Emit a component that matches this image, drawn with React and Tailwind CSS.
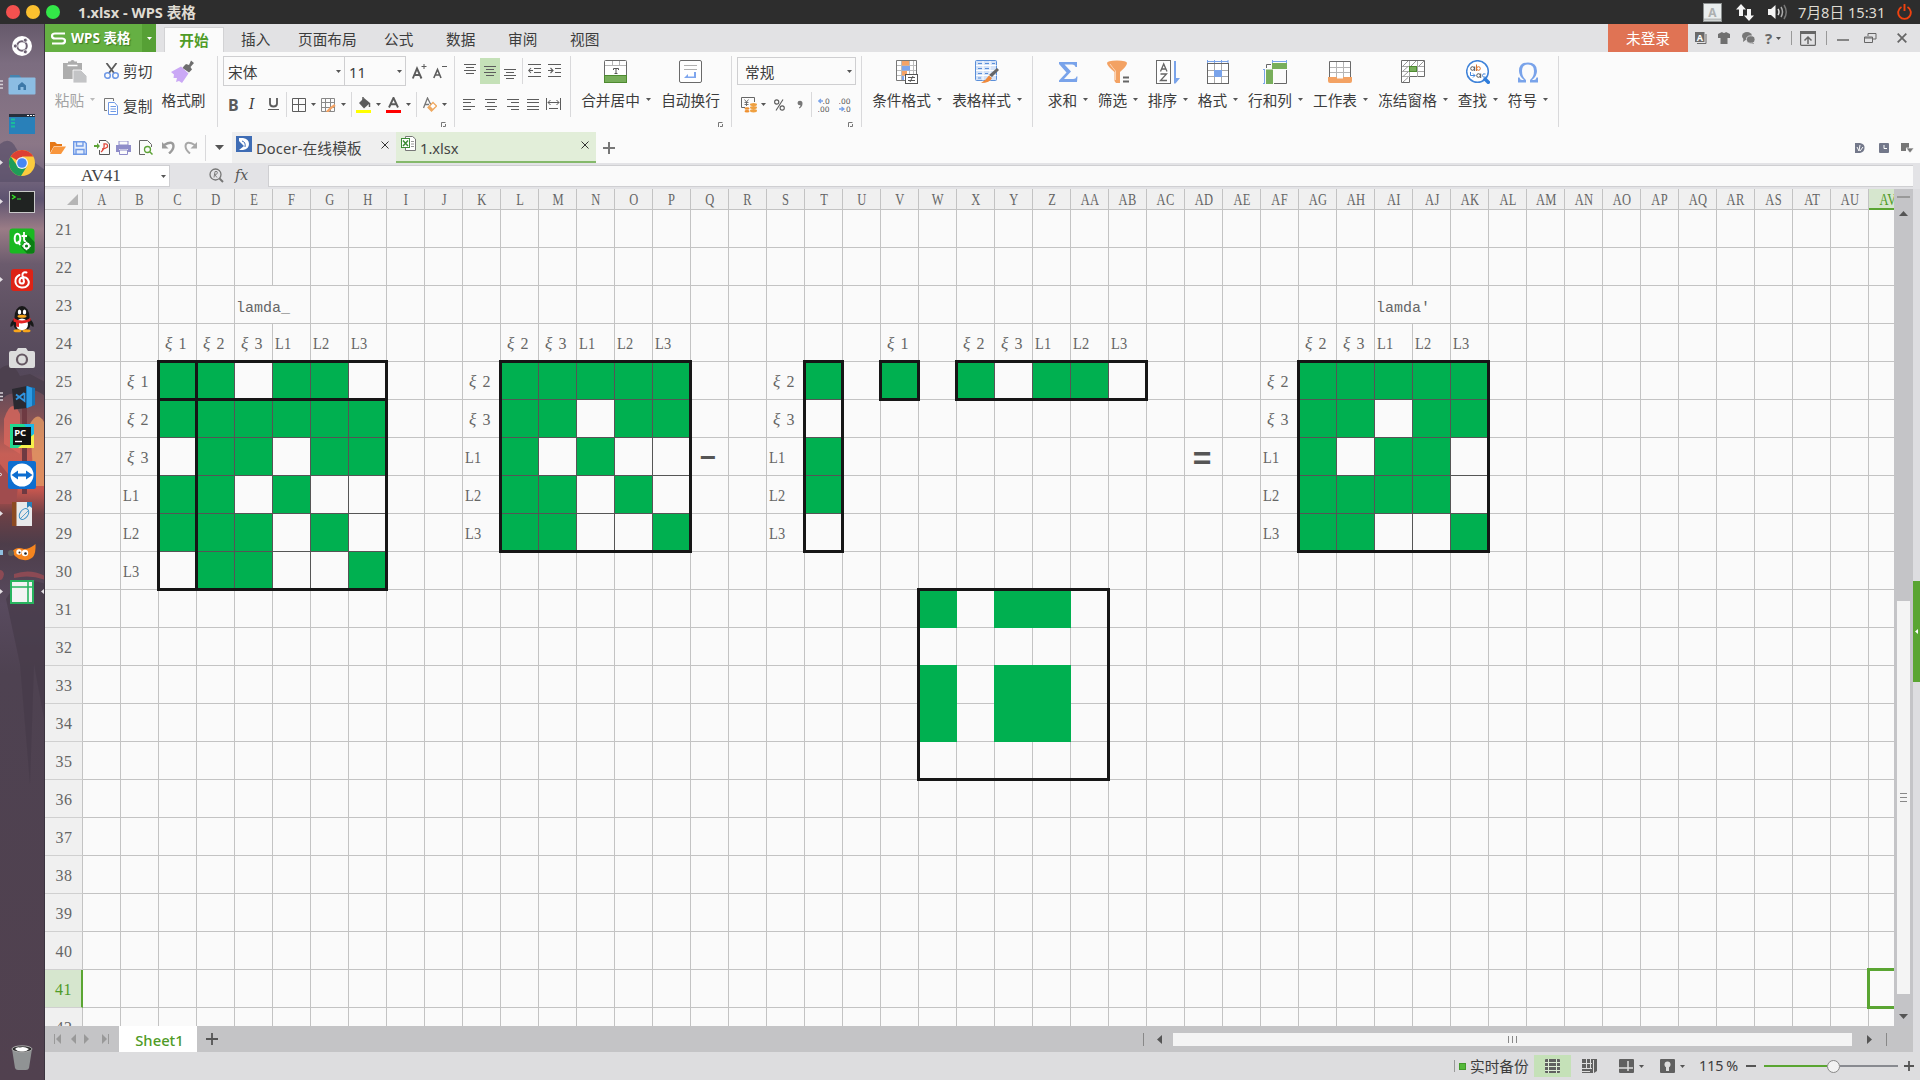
import React from "react";

const UI = "font-['Noto_Sans','Noto_Sans_CJK_SC',sans-serif]";

function Svg({ w = 24, h = 24, vb, className = "", children }) {
  return (
    <svg width={w} height={h} viewBox={vb || `0 0 ${w} ${h}`} fill="none" className={`block shrink-0 ${className}`}>
      {children}
    </svg>
  );
}

function Caret({ className = "", color = "#555" }) {
  return (
    <Svg w={5} h={3} className={className}>
      <path d="M0 0H5L2.5 3Z" fill={color} />
    </Svg>
  );
}

/* ---------- Title bar ---------- */

function TitleBar() {
  return (
    <div className="flex h-6 items-center bg-[#2d2d2d] text-[#dfdbd2]">
      <div className="ml-1.5 flex gap-1.5">
        <span className="size-3.5 rounded-full bg-[#f4514f]" />
        <span className="size-3.5 rounded-full bg-[#fbc02f]" />
        <span className="size-3.5 rounded-full bg-[#33e748]" />
      </div>
      <span className="ml-[18px] text-[14.67px] leading-6 font-bold whitespace-pre">1.xlsx - WPS 表格</span>
      <div className="ml-auto flex items-center">
        <Svg w={19} h={19}>
          <rect x=".5" y=".5" width="18" height="18" fill="#e9eded" stroke="#8b8f8f" />
          <path d="M1 16.5H18" stroke="#b9bdbd" strokeWidth="2" />
          <text x="9.500" y="14" fontSize="12" fontWeight="bold" textAnchor="middle" fill="#adb0b0" fontFamily="Noto Sans">A</text>
        </Svg>
        <Svg w={18} h={17} className="ml-3.5">
          <path d="M5 0L10 5.500H7V12H3V5.500H0ZM13 17L8 11.500H11V5H15V11.500H18Z" fill="#f4f4f4" />
        </Svg>
        <Svg w={20} h={16} className="ml-3.5">
          <path d="M0 5H3L7.500 1V15L3 11H0Z" fill="#f4f4f4" />
          <path d="M10 5Q12 8 10 11" stroke="#ddd" strokeWidth="1.500" />
          <path d="M13 3Q16 8 13 13" stroke="#aaa" strokeWidth="1.500" />
          <path d="M16 1Q20.500 8 16 15" stroke="#777" strokeWidth="1.500" />
        </Svg>
        <span className="ml-[10px] w-[87px] text-[14.67px] leading-6 whitespace-nowrap">7月8日 15:31</span>
        <Svg w={15} h={16} className="mr-[8px] ml-[12px]">
          <path d="M4.500 3A6.300 6.300 0 1 0 10.500 3M7.500 0V7" stroke="#f1420f" strokeWidth="1.900" />
        </Svg>
      </div>
    </div>
  );
}

/* ---------- Launcher ---------- */

const launcher = [
  { mark: "", icon: (
    <Svg w={28} h={28}>
      <circle cx="14" cy="14" r="10" fill="#fff" />
      <circle cx="14" cy="14" r="4.800" stroke="#6c6072" strokeWidth="2" />
      <circle cx="7.300" cy="14" r="2" fill="#6c6072" stroke="#fff" strokeWidth=".8" />
      <circle cx="17.300" cy="8.200" r="2" fill="#6c6072" stroke="#fff" strokeWidth=".8" />
      <circle cx="17.300" cy="19.800" r="2" fill="#6c6072" stroke="#fff" strokeWidth=".8" />
    </Svg>) },
  { mark: "bars", icon: (
    <Svg w={28} h={28}>
      <path d="M2 4H11L13 6V10H2Z" fill="#4684b0" />
      <rect x="0.500" y="6.500" width="27" height="17" rx="1" fill="#8cbde3" />
      <path d="M14 11L18 14.500V19H15.500V16H12.500V19H10V14.500Z" fill="#3d78a8" />
    </Svg>) },
  { mark: "", icon: (
    <Svg w={28} h={28}>
      <rect x="1" y="4" width="26" height="20" fill="#2980b9" />
      <rect x="1" y="4" width="26" height="3" fill="#262f3c" />
      <path d="M19 5.500H21M22 5.500H24M25 5.500H26.500" stroke="#fff" />
      <path d="M3 9.500H7M3 13H7M3 16.500H7" stroke="#1abc9c" strokeWidth="2.200" />
    </Svg>) },
  { mark: "tri", icon: (
    <Svg w={28} h={28}>
      <circle cx="14" cy="14" r="13" fill="#fccb3e" />
      <path d="M14 14L2.700 7.500A13 13 0 0 1 25.300 7.500H14Z" fill="#dd4033" />
      <path d="M2.700 7.500A13 13 0 0 0 13 27L18.500 18L8 15Z" fill="#1f9d58" />
      <circle cx="14" cy="14" r="6" fill="#f3f3f3" />
      <circle cx="14" cy="14" r="4.800" fill="#4486f4" />
    </Svg>) },
  { mark: "tri", icon: (
    <Svg w={28} h={28}>
      <rect x="1.500" y="3.500" width="25" height="21" fill="#202322" stroke="#c9c9c9" />
      <path d="M4 7L7 9L4 11" stroke="#35e225" strokeWidth="1.500" />
      <path d="M9 11H13" stroke="#35b335" strokeWidth="1.300" />
    </Svg>) },
  { mark: "", icon: (
    <Svg w={28} h={28}>
      <rect x="1.500" y="1.500" width="25" height="25" rx="3" fill="#19b921" />
      <path d="M13 20L20 8L26.500 15V24Q26.500 26.500 24 26.500H19Z" fill="#0b7f13" />
      <ellipse cx="9.500" cy="11.500" rx="2.800" ry="4.800" stroke="#fff" strokeWidth="2" />
      <path d="M10 14L12 18M16 5V12Q16 14.500 18 14M13.500 9H19" stroke="#fff" strokeWidth="1.800" />
      <circle cx="18.500" cy="19" r="2.500" stroke="#fff" strokeWidth="1.800" />
      <path d="M18.500 14.700V16M18.500 22V23.300M14.200 19H15.500M21.500 19H22.800" stroke="#fff" strokeWidth="1.500" />
    </Svg>) },
  { mark: "tri", icon: (
    <Svg w={28} h={28}>
      <rect x="3" y="3" width="22" height="22" rx="3" fill="#dd2316" />
      <path d="M18.500 6.500C16 5.500 14 7 14.500 9.500L16 15.500C15.500 18.500 11.500 18 11.500 15C11.500 11 17 10 19.500 13C23 18 18.500 22 13.500 21.500C6 20.500 5.500 12 11.500 9" stroke="#fff" strokeWidth="2" strokeLinecap="round" />
    </Svg>) },
  { mark: "", icon: (
    <Svg w={28} h={28}>
      <path d="M6 14Q1.500 18 2.500 22Q4 22 6 19ZM22 14Q26.500 18 25.500 22Q24 22 22 19Z" fill="#181818" />
      <ellipse cx="14" cy="12" rx="7.500" ry="11" fill="#181818" />
      <ellipse cx="14" cy="19" rx="8.500" ry="7.500" fill="#181818" />
      <ellipse cx="14" cy="19.500" rx="6" ry="6" fill="#fff" />
      <ellipse cx="11.500" cy="7" rx="1.700" ry="2.500" fill="#fff" />
      <ellipse cx="16.500" cy="7" rx="1.700" ry="2.500" fill="#fff" />
      <ellipse cx="14" cy="11.300" rx="4.500" ry="1.500" fill="#f8a51b" />
      <path d="M5.500 13Q14 18 22.500 13V16Q14 20.500 5.500 16.500ZM8 16.500H11V22L8 21.500Z" fill="#e32424" />
      <ellipse cx="9.500" cy="25.800" rx="4" ry="1.500" fill="#f8a51b" />
      <ellipse cx="18.500" cy="25.800" rx="4" ry="1.500" fill="#f8a51b" />
    </Svg>) },
  { mark: "", icon: (
    <Svg w={28} h={28}>
      <path d="M3 7H8L10 4H18L20 7H25Q27 7 27 9V22Q27 24 25 24H3Q1 24 1 22V9Q1 7 3 7Z" fill="#dcdcdc" />
      <circle cx="14" cy="15.500" r="5" stroke="#655762" strokeWidth="2.200" />
    </Svg>) },
  { mark: "bars", icon: (
    <Svg w={28} h={28}>
      <path d="M4 6L19 3V25L6 26.500Z" fill="#2a2930" />
      <path d="M18 3L27 5V22L18 25Z" fill="#1673b5" />
      <path d="M19 3L24 5V23L19 25Z" fill="#2c9ae2" />
      <path d="M16.500 10V18L8 11.500M8 16.500L16.500 10" stroke="#3195df" strokeWidth="1.800" />
    </Svg>) },
  { mark: "", icon: (
    <Svg w={28} h={28}>
      <rect x="2" y="2" width="24" height="24" fill="#22d88f" />
      <path d="M16 2H26V16Z" fill="#1cb7e8" />
      <path d="M26 12V26H10Z" fill="#f6f04a" />
      <rect x="5" y="5" width="18" height="18" fill="#111" />
      <text x="6.200" y="14.200" fontSize="9.500" fontWeight="bold" fill="#fff" fontFamily="Noto Sans">PC</text>
      <path d="M7 19.500H14" stroke="#fff" strokeWidth="1.400" />
    </Svg>) },
  { mark: "dot", icon: (
    <Svg w={28} h={28}>
      <rect width="28" height="28" rx="2" fill="#0d6ed0" />
      <circle cx="14" cy="14" r="11.500" fill="#fff" />
      <path d="M3.500 14L10 9.500V12.500H18V9.500L24.500 14L18 18.500V15.500H10V18.500Z" fill="#0d6ed0" />
    </Svg>) },
  { mark: "tri", icon: (
    <Svg w={28} h={28}>
      <rect x="4" y="2" width="20" height="24" fill="#e9e9ea" />
      <rect x="4" y="2" width="4.500" height="24" fill="#8c4a22" />
      <path d="M19 2H24V8L21.500 6L19 8Z" fill="#2980b9" />
      <ellipse cx="16" cy="14" rx="4" ry="6" transform="rotate(35 16 14)" stroke="#3b8fc4" />
      <path d="M12 19L21 10" stroke="#3b8fc4" strokeWidth=".8" />
    </Svg>) },
  { mark: "blue", icon: (
    <Svg w={28} h={28}>
      <path d="M4 13Q8 7 16 10Q22 10 27.500 5Q28 14 25 18Q20 23 11 20Q6 17 4 13Z" fill="#f5851f" />
      <circle cx="3" cy="14" r="3" fill="#5f5f5f" />
      <circle cx="11" cy="13" r="2.700" fill="#fff" />
      <circle cx="17" cy="14" r="3.200" fill="#fff" />
      <circle cx="11.500" cy="13.500" r="1" fill="#222" />
      <circle cx="17.500" cy="14.500" r="1.300" fill="#222" />
    </Svg>) },
  { mark: "both", icon: (
    <Svg w={28} h={28}>
      <rect x="3" y="3" width="22" height="22" fill="#f3f3f3" stroke="#28b45f" strokeWidth="2" />
      <path d="M3 9H25M20 3V25" stroke="#28b45f" strokeWidth="1.600" />
    </Svg>) },
];

function Mark({ kind }) {
  if (kind === "bars") return <Svg w={3} h={9}><path d="M0 1H3M0 4.500H3M0 8H3" stroke="#d5d0d6" strokeWidth="1.300" /></Svg>;
  if (kind === "blue") return <Svg w={3} h={5}><path d="M0 0H3V5H0Z" fill="#8fc0e0" /></Svg>;
  if (kind === "dot") return <Svg w={3} h={5}><path d="M0 1L2 2.500L0 4" stroke="#ddd" /></Svg>;
  if (kind) return <Svg w={3} h={5}><path d="M0 0L3 2.500L0 5Z" fill="#e5e0e5" /></Svg>;
  return null;
}

function Launcher() {
  return (
    <aside className="relative flex w-[45px] shrink-0 flex-col overflow-hidden border-r border-[#3c3440] bg-[linear-gradient(to_bottom,#66596b_0px,#7c6d80_40px,#8b7787_120px,#77687f_150px,#5d5370_175px,#9a7c86_205px,#6b5b6d_240px,#5c4f60_300px,#54485a_350px,#8b5355_400px,#c65f56_430px,#c8574f_465px,#6c4046_490px,#4d3d4a_520px,#584a5e_580px,#4e4251_650px,#51414f_1056px)]">
      <svg width="45" height="1056" viewBox="0 0 45 1056" fill="none" className="absolute inset-0">
        <path d="M0 120Q10 112 16 124Q20 134 34 138L45 146V158H0Z" fill="#5a5069" opacity=".7" />
        <path d="M0 345Q12 335 20 352L30 350L45 358V372Q30 360 20 372Q10 365 0 378Z" fill="#4c404e" />
        <path d="M4 395Q12 372 20 390V430L4 420Z" fill="#d8665c" opacity=".8" />
        <path d="M30 400Q38 385 45 400V462H34Z" fill="#e29a64" opacity=".8" />
        <path d="M22 380H27V470H22Z" fill="#6e3a42" />
        <path d="M0 440Q8 450 18 462L16 480H0Z" fill="#a04c4e" />
        <path d="M0 546Q3 546 4 550Q3 556 0 556ZM14 550Q30 544 45 552V556Q30 550 14 554Z" fill="#8c4a54" />
        <path d="M6 575Q20 550 45 560V700L34 640L30 760L20 640Z" fill="#463a49" opacity=".7" />
      </svg>
      <div className="relative flex h-full flex-col pt-[2px]">
        {launcher.map((it, i) => (
          <div key={i} className="flex h-[39px] items-center">
            <div className="w-2"><Mark kind={it.mark} /></div>
            {it.icon}
            {it.mark === "both" && <Svg w={3} h={5} className="ml-auto"><path d="M3 0L0 2.500L3 5Z" fill="#e5e0e5" /></Svg>}
          </div>
        ))}
        <Svg w={28} h={28} className="mt-auto mb-[8px] ml-2">
          <path d="M4 5H24L21 24Q20.500 26 18 26H10Q7.500 26 7 24Z" fill="#909394" />
          <ellipse cx="14" cy="5" rx="10" ry="3.200" fill="#2f2f2f" stroke="#aaa" />
          <path d="M7 5Q9 2.500 12 3.500Q16 2 21 5Q18 8 14 7.500Q10 8 7 5Z" fill="#fff" />
        </Svg>
      </div>
    </aside>
  );
}

/* ---------- Menu tabs ---------- */

function MenuRow() {
  return (
    <div className="flex h-7 items-stretch bg-[#e2e2e4] text-[14.67px] text-[#3c3c3c]">
      <div className="flex w-[97px] items-center bg-[#65b043] text-white">
        <Svg w={15} h={13} className="ml-1.5">
          <path d="M14 1.500H4Q1 1.500 1 4Q1 6.500 4 6.500H11Q14 6.500 14 9Q14 11.500 11 11.500H1" stroke="#fff" strokeWidth="2.200" />
        </Svg>
        <span className="ml-[5px] text-[13.5px] font-bold whitespace-nowrap [text-shadow:1px_1px_1px_#3c7a20]">WPS 表格</span>
      </div>
      <div className="flex w-[14px] items-center justify-center bg-[#56a035]"><Caret color="#fff" /></div>
      <div className="ml-2 flex h-[25px] w-[60px] items-center justify-center self-end border border-b-0 border-[#d2d2d4] bg-[#fbfbfb] pb-px text-[14.67px] font-bold text-[#4f9b27]">开始</div>
      <div className="ml-[17px] flex pt-px [&>span]:flex [&>span]:items-center [&>span]:whitespace-nowrap">
        <span className="w-[57px]">插入</span>
        <span className="w-[86px]">页面布局</span>
        <span className="w-[62px]">公式</span>
        <span className="w-[62px]">数据</span>
        <span className="w-[62px]">审阅</span>
        <span>视图</span>
      </div>
      <div className="ml-auto flex items-center">
        <div className="flex h-full w-20 items-center justify-center bg-[#e07354] text-white">未登录</div>
        <Svg w={12} h={12} className="ml-[7px]">
          <rect width="9.500" height="10" fill="#6a6a6a" />
          <path d="M11 2V11.500H2" stroke="#6a6a6a" />
          <text x="4.800" y="8.500" fontSize="9" fontWeight="bold" textAnchor="middle" fill="#fff" fontFamily="Noto Sans">A</text>
        </Svg>
        <Svg w={12} h={12} className="ml-[11px]">
          <path d="M0 2L4 0Q6 2 8 0L12 2V6H9.500V12H2.500V6H0Z" fill="#6f6f6f" />
        </Svg>
        <Svg w={13} h={12} className="ml-3">
          <ellipse cx="5" cy="4" rx="5" ry="4" fill="#777" />
          <path d="M1.500 6L1 10L5 7ZM10 9L12 12L7 11Z" fill="#777" />
          <ellipse cx="8.700" cy="7.500" rx="4.300" ry="3.700" fill="#777" stroke="#e2e2e4" strokeWidth=".8" />
        </Svg>
        <span className="ml-[10px] w-[9px] text-[15px] font-bold text-[#6a6a6a]">?</span>
        <Caret className="ml-[2px]" />
        <span className="ml-[10px] h-3.5 w-px bg-[#999]" />
        <Svg w={16} h={15} className="ml-2">
          <rect x=".6" y=".6" width="14.800" height="13.800" rx="1" stroke="#666" strokeWidth="1.200" />
          <path d="M0 0H16V3H0Z" fill="#666" />
          <path d="M8 13V6M4.500 9.500L8 6L11.500 9.500" stroke="#666" strokeWidth="1.500" />
        </Svg>
        <span className="ml-[10px] h-3.5 w-px bg-[#999]" />
        <Svg w={12} h={12} className="ml-[10px]"><path d="M0 8H12" stroke="#666" strokeWidth="1.500" /></Svg>
        <Svg w={13} h={12} className="ml-[15px]">
          <path d="M.5 5H8.500V10.500H.5ZM.5 6H8.500M4 4V1.500H12V7H9" stroke="#666" />
        </Svg>
        <Svg w={10} h={10} className="mr-[13px] ml-5"><path d="M.7 .7L9.300 9.300M9.300 .7L.7 9.300" stroke="#666" strokeWidth="1.800" /></Svg>
      </div>
    </div>
  );
}

/* ---------- Ribbon ---------- */

function Sep({ className = "" }) {
  return <span className={`w-px shrink-0 bg-[#d9d9db] ${className}`} />;
}

function Lines({ d, w = 14, h = 14, children, className = "" }) {
  return (
    <Svg w={w} h={h} className={className}>
      <path d={d} stroke="#5c5c5c" />
      {children}
    </Svg>
  );
}

function Dialog({ className = "" }) {
  return <Svg w={5} h={5} className={className}><path d="M.5 5V.5H4.500M2 4.500H4.500V2" stroke="#777" /></Svg>;
}

const bigIcons = {
  merge: (
    <Svg>
      <rect x=".5" y=".5" width="22" height="22" rx="1" fill="#fff" stroke="#6a6a6a" />
      <path d="M1 5.500H22M8.500 1V5.500M15.500 1V5.500" stroke="#b5b5b5" />
      <rect x=".5" y="15.500" width="22" height="7" fill="#77ad5a" stroke="#4e8a30" />
      <path d="M9.500 10V8.500H14.500V10M12 8.500V13.500M10.500 13.500H13.500" stroke="#555" />
    </Svg>),
  wrap: (
    <Svg>
      <rect x=".5" y=".5" width="22" height="22" rx="1.500" fill="#fff" stroke="#6a6a6a" />
      <path d="M5 5.500H18M5 9.500H18" stroke="#b0b0b0" />
      <path d="M15 12H17V18H8L5 18L9 14V16.500H15Z" fill="#7ea6ee" />
    </Svg>),
  cond: (
    <Svg>
      <path d="M1.500 .5H21.500V20.500H1.500Z" fill="#fff" stroke="#777" />
      <path d="M2 5.500H21M2 10.500H21M2 15.500H21M6.500 1V20M14.500 1V20M18.500 1V15" stroke="#bcbcbc" />
      <path d="M7 1H14V5.500H7ZM7 11H12V15.500H7Z" fill="#f5a368" />
      <path d="M7 6H15V10.500H7ZM7 16H9V20H7Z" fill="#7ea6ee" />
      <rect x="10.500" y="14.500" width="12" height="9" fill="#fff" stroke="#555" />
      <path d="M13 17.500H20M13 20.500H20M18 16L15 22" stroke="#555" />
    </Svg>),
  style: (
    <Svg>
      <rect x=".5" y=".5" width="21" height="20" rx="1" fill="#d4e2f7" stroke="#5b8fd9" />
      <path d="M1 5.500H21.500M1 10.500H21.500M1 15.500H21.500M8 1V20.500M15 1V20.500" stroke="#fff" />
      <path d="M3 3.500H7M10 3.500H14M17 3.500H20M3 8.500H7M10 8.500H14M3 13.500H7M10 13.500H13M3 18H6" stroke="#5b8fd9" />
      <path d="M22 8L24 10L17 17L14 15Z" fill="#666" />
      <path d="M14 15.500L17 18Q15 23 6 23Q11 20 14 15.500Z" fill="#f08a3c" />
    </Svg>),
  sum: <Svg><path d="M3 2H21V7H19.500Q19 4.500 16 4.500H8.500L15 11.500L8 19H17Q20 19 20.500 16.500H21.500L21 22H3V20.500L10.500 12.500L3 4Z" fill="#79a3ea" /></Svg>,
  filter: (
    <Svg>
      <path d="M1 3Q1 .5 11 .5Q21 .5 21 3Q21 6 14 12V23H10L8.500 21V12Q1 6 1 3Z" fill="#f3a263" />
      <path d="M4 4Q6 7 9.500 11V20" stroke="#fbd3b3" />
      <path d="M17 17.500H23M17 21.500H23" stroke="#666" strokeWidth="1.800" />
    </Svg>),
  sort: (
    <Svg className="-ml-px">
      <rect x=".5" y=".5" width="14" height="23" fill="#fff" stroke="#6a6a6a" />
      <path d="M4.500 11.500L7.700 4L11 11.500M5.500 9H10M4.500 14H10.500L4.500 20.500H11" stroke="#666" strokeWidth="1.300" />
      <path d="M18 1H20V18H24L19.500 23.500H18Z" fill="#79a3ea" />
    </Svg>),
  format: (
    <Svg>
      <path d="M1 1.500H22M1.500 0V3M8.500 0V3M15.500 0V3M22 0V3" stroke="#79a3ea" />
      <rect x="1.500" y="3.500" width="21" height="20" stroke="#666" fill="#fff" />
      <path d="M2 10.500H22M2 16.500H22M8.500 4V23M15.500 4V23" stroke="#aaa" />
      <rect x="8" y="10" width="8" height="7" fill="#79a3ea" />
    </Svg>),
  rowcol: (
    <Svg className="-ml-[2px]">
      <path d="M9 1.500H23.500M9.500 0V3M23.500 0V3M1.500 9.500V23.500M0 9.500H2M0 23.500H2" stroke="#79a3ea" />
      <path d="M3.500 8V4.500H8M23.500 10V23.500H11" stroke="#666" />
      <rect x="9" y="3" width="15" height="6" fill="#78ae5b" />
      <rect x="3" y="9.500" width="7" height="14.500" fill="#78ae5b" />
    </Svg>),
  sheet: (
    <Svg className="-ml-[2px]">
      <path d="M1.500 17V1.500H22.500V17" stroke="#6a6a6a" fill="#fff" />
      <path d="M2 7.500H22M2 12.500H22M8.500 2V17M15.500 2V17" stroke="#b5b5b5" />
      <path d="M0 17H9V18.500H15V17H24V21Q24 23 22 23H2Q0 23 0 21Z" fill="#f3a263" />
    </Svg>),
  freeze: (
    <Svg>
      <path d="M.5 .5H23.500V16.500H8.500V22.500H.5Z" fill="#fff" stroke="#6a6a6a" />
      <path d="M1 6.500H23M1 11.500H23M1 16.500H8M8.500 1V17M16.500 1V17" stroke="#aaa" />
      <path d="M2 6L7 1M10 6L15 1M18 6L23 1M2 11L7 6.500M2 16.500L7 12M2 22L7 17.500" stroke="#999" />
      <rect x="8.500" y="6.500" width="7" height="5" fill="#78ae5b" stroke="#4e8a30" />
    </Svg>),
  find: (
    <Svg>
      <circle cx="11.500" cy="11.500" r="10.800" stroke="#4184d9" strokeWidth="1.500" fill="#fff" />
      <path d="M18 18L23.500 23.500" stroke="#2f7ddb" strokeWidth="3.500" />
      <circle cx="6.500" cy="8.500" r="1.800" stroke="#555" /><path d="M8.700 6.500V11" stroke="#555" />
      <circle cx="12.500" cy="8.500" r="1.800" stroke="#d9722b" /><path d="M10.500 4.500V11" stroke="#d9722b" />
      <path d="M4.500 12V15.500H9M7 13.500L9 15.500L7 17.500" stroke="#4184d9" />
      <circle cx="12.500" cy="15.500" r="1.800" stroke="#555" /><path d="M14.700 13.500V18" stroke="#555" />
      <path d="M19.500 14Q16.500 13 16.500 15.500Q16.500 18 19.500 17" stroke="#4184d9" />
    </Svg>),
  omega: (
    <Svg>
      <path d="M2 22.500V17.500H3.500Q4 20 6 20H8Q3 16 3 11Q3 2.500 12 2.500Q21 2.500 21 11Q21 16 16 20H18Q20 20 20.500 17.500H22V22.500H14V20Q18 17 18 11Q18 4.500 12 4.500Q6 4.500 6 11Q6 17 10 20V22.500Z" fill="#79a3ea" />
    </Svg>),
  paste: (
    <Svg>
      <path d="M0 3H5V1.500H7.500Q7.500 0 9.500 0Q11.500 0 11.500 1.500H14V3H19V10H11V19H0Z" fill="#adadad" />
      <path d="M4.500 5.500H14.500" stroke="#fff" strokeWidth="1.500" />
      <path d="M10 10H18L24 16V23H10Z" fill="#c3c4c6" stroke="#fff" strokeWidth=".8" />
    </Svg>),
  brush: (
    <Svg className="-ml-[4px]">
      <path d="M14 6L16 4L19 5L21 .5L24 3L20.500 7L22 9.500L19 12.500L12.500 8Z" fill="#6e6e6e" />
      <path d="M1 12L11 6.500L18.500 13.500L12 23L9 21L6 22L7 18L3.500 18L4 14.500Z" fill="#caa8f5" />
    </Svg>),
};

function Big({ icon, label, caret = true, className = "", dim = false }) {
  return (
    <div className={`flex shrink-0 flex-col items-center pt-2 ${className}`}>
      {bigIcons[icon]}
      <div className={`mt-[5px] flex h-[22px] items-center text-[14.67px] whitespace-nowrap ${dim ? "text-[#a3a3a3]" : "text-[#3c3c3c]"}`}>
        <span>{label}</span>
        {caret && <Caret className="-mt-px ml-[6px]" color={dim ? "#bbb" : "#555"} />}
      </div>
    </div>
  );
}

function Ribbon() {
  return (
    <div className="flex h-20 items-start bg-[#fbfbfb] text-[14.67px] text-[#3c3c3c]">
      <Big icon="paste" label="粘贴" dim className="ml-[7px] w-[46px]" />
      <div className="ml-[6px] flex w-[49px] flex-col pt-[8px]">
        <div className="flex h-[22px] items-center gap-1 whitespace-nowrap">
          <Svg w={15} h={16}>
            <path d="M2.500 0L10 10M12.500 0L5 10" stroke="#5c5c5c" strokeWidth="1.800" />
            <circle cx="3.500" cy="12.500" r="2.800" stroke="#6f99e6" strokeWidth="1.500" />
            <circle cx="11.500" cy="12.500" r="2.800" stroke="#6f99e6" strokeWidth="1.500" />
          </Svg>
          <span>剪切</span>
        </div>
        <div className="mt-[13px] flex h-[22px] items-center gap-1 whitespace-nowrap">
          <Svg w={15} h={17}>
            <path d="M3 12.500H.5V.5H9.500V3" stroke="#777" />
            <path d="M4.500 4.500H10.500L13.500 8V16.500H4.500Z" fill="#fff" stroke="#6f99e6" />
            <path d="M6.500 8.500H12M6.500 11H12M6.500 13.500H12" stroke="#6f99e6" />
          </Svg>
          <span>复制</span>
        </div>
      </div>
      <Big icon="brush" label="格式刷" caret={false} className="ml-[8px] w-[45px]" />
      <Sep className="mt-1 ml-[11px] h-[71px]" />

      <div className="ml-[5px] w-[225px] pt-1">
        <div className="flex h-[30px] items-center">
          <div className="flex h-[30px] w-[122px] items-center justify-between border border-[#cfcfd1] bg-[#fbfbfb] pt-px pr-[3px] pl-1"><span>宋体</span><Caret /></div>
          <div className="-ml-px flex h-[30px] w-[62px] items-center justify-between border border-[#cfcfd1] bg-[#fbfbfb] pt-px pr-[3px] pl-1"><span>11</span><Caret /></div>
          <Svg w={15} h={17} className="ml-[6px]">
            <path d="M.8 15.500L5 5.500L9.500 15.500M2.500 12H8" stroke="#5c5c5c" strokeWidth="1.900" />
            <path d="M9.500 3.500H14.500M12 1V6" stroke="#5c5c5c" />
          </Svg>
          <Svg w={15} h={17} className="ml-[6px]">
            <path d="M.8 15L4.500 6.500L8 15M2.500 12H7" stroke="#5c5c5c" strokeWidth="1.600" />
            <path d="M9 3.500H14" stroke="#5c5c5c" />
          </Svg>
        </div>
        <div className="mt-[6px] flex h-[25px] items-center">
          <span className="ml-[5px] w-[14px] font-['Noto_Sans'] text-[16px] font-bold text-[#5a5a5a]">B</span>
          <span className="ml-[7px] w-[14px] font-['DejaVu_Serif'] text-[14px] italic">I</span>
          <Svg w={11} h={13} className="ml-[5px]"><path d="M2 0V5.500Q2 8.500 5.500 8.500Q9 8.500 9 5.500V0" stroke="#5a5a5a" strokeWidth="1.800" /><path d="M0 11.500H11" stroke="#5a5a5a" /></Svg>
          <Sep className="ml-[7px] h-[25px]" />
          <Lines w={14} h={14} className="ml-[5px]" d="M.5 .5H13.500V13.500H.5ZM6.500 0V14M0 6.500H14" />
          <Caret className="ml-[5px]" />
          <Svg w={15} h={14} className="ml-[5px]">
            <path d="M.5 .5H13.500V13.500H.5ZM4.500 0V14M9.500 0V14M0 4.500H14M0 9.500H14" stroke="#888" />
            <path d="M6 14Q9 10 14 7" stroke="#f3a263" strokeWidth="2.500" />
          </Svg>
          <Caret className="ml-[5px]" />
          <Sep className="ml-[5px] h-[25px]" />
          <Svg w={15} h={16} className="ml-1">
            <path d="M3 6L8 1L14 6L8 11.500Z" fill="#5c5c5c" /><path d="M7 0V5M13.500 6V10" stroke="#5c5c5c" strokeWidth="1.500" />
            <path d="M0 13H15V16H0Z" fill="#ff0" />
          </Svg>
          <Caret className="ml-[5px]" />
          <Svg w={15} h={16} className="ml-[5px]">
            <path d="M3 10.500L7.500 0.800L12 10.500M4.500 7.300H10.500" stroke="#5c5c5c" strokeWidth="1.900" />
            <path d="M0 13H15V16H0Z" fill="red" />
          </Svg>
          <Caret className="ml-[5px]" />
          <Sep className="ml-[5px] h-[25px]" />
          <Svg w={14} h={15} className="ml-[6px]">
            <path d="M.5 11L4.500 1L8 8M2 7.500H6" stroke="#777" strokeWidth="1.300" />
            <path d="M10 5.500L13.500 9L8.500 14L5 10.500Z" stroke="#efa961" strokeWidth="1.300" fill="#fff" />
            <path d="M6.800 8.800L10.300 12.300L8.500 14L5 10.500Z" fill="#efa961" />
          </Svg>
          <Caret className="ml-[5px]" />
        </div>
        <Dialog className="mt-[5px] ml-[218px]" />
      </div>
      <Sep className="mt-1 ml-[6px] h-[71px]" />

      <div className="ml-[8px] flex w-[99px] flex-col pt-[6px]">
        <div className="flex h-[26px] items-center">
          <Lines w={13} h={20} className="ml-px" d="M0 3.500H12M2 6.500H10M0 9.500H12M2 12.500H10" />
          <span className="ml-[3px] flex h-[26px] w-5 items-center justify-center bg-[#c5e1b8]"><Lines w={12} h={12} d="M0 1.500H12M2 4.500H10M0 7.500H12M2 10.500H10" /></span>
          <Lines w={13} h={20} className="ml-1" d="M0 8.500H12M2 11.500H10M0 14.500H12M2 17.500H10" />
          <Sep className="ml-[5px] h-[26px]" />
          <Svg w={14} h={14} className="ml-[5px]"><path d="M0 .5H13M6 4.500H13M6 8.500H13M0 12.500H13M.5 6.500H5M3 4L.7 6.500L3 9" stroke="#5c5c5c" strokeWidth="1.100" /></Svg>
          <Svg w={14} h={14} className="ml-[6px]"><path d="M0 .5H13M7 4.500H13M7 8.500H13M0 12.500H13M0 6.500H5M2.500 4L5 6.500L2.500 9" stroke="#5c5c5c" strokeWidth="1.100" /></Svg>
        </div>
        <div className="mt-[14px] flex h-3 items-center">
          <Lines w={12} h={11} d="M0 .5H12M0 3.500H8M0 7.500H12M0 10.500H8" />
          <Lines w={12} h={11} className="ml-[10px]" d="M0 .5H12M2 3.500H10M0 7.500H12M2 10.500H10" />
          <Lines w={12} h={11} className="ml-[10px]" d="M0 .5H12M4 3.500H12M0 7.500H12M4 10.500H12" />
          <Lines w={12} h={11} className="ml-2" d="M0 .5H12M0 3.500H12M0 7.500H12M0 10.500H12" />
          <Lines w={15} h={12} className="ml-[7px]" d="M.5 0V12M14.500 0V12M3 10.500H12M2 4.500H13M4.500 2L2 4.500L4.500 7M10.500 2L13 4.500L10.500 7" />
        </div>
      </div>
      <Sep className="mt-1 ml-[8px] h-[61px]" />
      <Big icon="merge" label="合并居中" className="ml-[6px] w-[78px]" />
      <Big icon="wrap" label="自动换行" caret={false} className="ml-[5px] w-[61px]" />
      <Dialog className="mt-[70px] -ml-[3px]" />
      <Sep className="mt-1 ml-[8px] h-[71px]" />

      <div className="ml-[5px] w-[119px] pt-[5px]">
        <div className="flex h-7 items-center justify-between border border-[#cfcfd1] pt-px pr-[3px] pl-[7px]"><span>常规</span><Caret /></div>
        <div className="mt-[7px] flex h-[25px] items-center">
          <Svg w={17} h={16} className="ml-1">
            <path d="M4 10.500H.5V.5H13.500V5" stroke="#666" />
            <path d="M3.500 2.500L5.500 5L7.500 2.500M5.500 5V9M3.500 5.500H7.500M3.500 7.500H7.500" stroke="#666" strokeWidth=".9" />
            <ellipse cx="12.500" cy="7.500" rx="3.500" ry="1.500" fill="#efa040" />
            <ellipse cx="12.500" cy="10.500" rx="3.500" ry="1.500" fill="#efa040" />
            <ellipse cx="12.500" cy="13.700" rx="3.500" ry="1.700" fill="#efa040" />
            <ellipse cx="6" cy="11.500" rx="2.500" ry="1.300" fill="#ef9030" />
            <ellipse cx="6" cy="14.300" rx="2.500" ry="1.300" fill="#ef9030" />
          </Svg>
          <Caret className="ml-[3px]" />
          <Svg w={11} h={12} className="ml-2">
            <circle cx="2.700" cy="3" r="2.100" stroke="#5c5c5c" strokeWidth="1.100" /><circle cx="8.200" cy="9" r="2.100" stroke="#5c5c5c" strokeWidth="1.100" /><path d="M9 .5L2 11.500" stroke="#5c5c5c" strokeWidth="1.100" />
          </Svg>
          <Svg w={6} h={10} className="ml-[12px]"><path d="M.5 3Q.5 .8 3 .8Q5.500 .8 5.500 3.500Q5.500 7 2 8.500V7.500Q3.500 6.500 3.500 5.300Q.5 5.500 .5 3Z" fill="#777" /></Svg>
          <Sep className="ml-[8px] h-[25px]" />
          <Svg w={13} h={16} className="ml-[6px]">
            <path d="M.5 4H5M3 2L.7 4L3 6" stroke="#79a3ea" strokeWidth="1.300" />
            <text x="4.500" y="7" fontSize="7.500" fill="#555" fontFamily="DejaVu Sans">.0</text><text x="-.5" y="15" fontSize="7.500" fill="#555" fontFamily="DejaVu Sans">.00</text>
          </Svg>
          <Svg w={13} h={16} className="ml-[8px]">
            <text x="-.5" y="7" fontSize="7.500" fill="#555" fontFamily="DejaVu Sans">.00</text><text x="4.500" y="15" fontSize="7.500" fill="#555" fontFamily="DejaVu Sans">.0</text>
            <path d="M0 12H5M2.500 10L5 12L2.500 14" stroke="#79a3ea" strokeWidth="1.300" />
          </Svg>
        </div>
        <Dialog className="mt-[5px] ml-[111px]" />
      </div>
      <Sep className="mt-1 ml-[5px] h-[71px]" />
      <Big icon="cond" label="条件格式" className="ml-[5px] w-20" />
      <Big icon="style" label="表格样式" className="w-20" />
      <Sep className="mt-1 ml-[5px] h-[71px]" />
      <Big icon="sum" label="求和" className="ml-[10px] w-[50px]" />
      <Big icon="filter" label="筛选" className="w-[50px]" />
      <Big icon="sort" label="排序" className="w-[50px]" />
      <Big icon="format" label="格式" className="w-[50px]" />
      <Big icon="rowcol" label="行和列" className="w-[65px]" />
      <Big icon="sheet" label="工作表" className="w-[65px]" />
      <Big icon="freeze" label="冻结窗格" className="w-20" />
      <Big icon="find" label="查找" className="w-[50px]" />
      <Big icon="omega" label="符号" className="w-[50px]" />
      <Sep className="mt-1 ml-[5px] h-[71px]" />
    </div>
  );
}

/* ---------- Quick access and document tabs ---------- */

function Close({ className = "" }) {
  return <Svg w={8} h={8} className={className}><path d="M.5 .5L7.500 7.500M7.500 .5L.5 7.500" stroke="#333" /></Svg>;
}

function DocRow() {
  return (
    <div className="flex h-[31px] items-stretch bg-[#fbfbfb] text-[14.67px] text-[#444]">
      <div className="flex w-[187px] items-center">
        <Svg w={16} h={12} className="ml-[5px]"><path d="M0 0H5L7 2H12V4H4L0 11Z" fill="#e67817" /><path d="M4 4.500H16L11 12H0Z" fill="#f9963c" /></Svg>
        <Svg w={14} h={14} className="ml-[7px]"><path d="M.7 .7H11.500L13.300 2.500V13.300H.7Z" stroke="#6f99e6" strokeWidth="1.400" fill="#e6effc" /><path d="M3.500 1V5H10V1M3 13V8.500H11V13" stroke="#6f99e6" strokeWidth="1.400" /></Svg>
        <Svg w={17} h={15} className="ml-[7px]"><path d="M0 5H3V3L6 6L3 9V7H0Z" fill="#5da336" /><path d="M5.500 3V.5H12L15.500 4V14.500H5.500V10" stroke="#555" /><path d="M7 12Q11 9 10 4Q14 3 13.500 7Q11 9 8 9" stroke="#e0483c" strokeWidth="1.300" /></Svg>
        <Svg w={15} h={14} className="ml-[5px]"><path d="M3 0H12V4H3Z" stroke="#8f8dc9" /><path d="M0 4H15V11H12V8H3V11H0Z" fill="#8f8dc9" /><path d="M3.500 9H11.500V13.500H3.500Z" stroke="#8f8dc9" /></Svg>
        <Svg w={14} h={15} className="ml-[8px]"><path d="M6 14.500H.5V.5H8.500L12.500 4.500V7" stroke="#666" /><circle cx="8.500" cy="9.500" r="3" stroke="#5da336" strokeWidth="1.300" /><path d="M11 12L13.500 14.500" stroke="#5da336" strokeWidth="1.500" /></Svg>
        <Svg w={13} h={13} className="ml-[9px]"><path d="M2 4Q11 -1 11.500 5Q11.500 9 7 12.500" stroke="#9b9b9b" strokeWidth="2.400" /><path d="M0 1V7.500H6.500Z" fill="#9b9b9b" /></Svg>
        <Svg w={13} h={13} className="ml-[9px]"><path d="M11 4Q2 -1 1.500 5Q1.500 9 6 12.500" stroke="#a8a8a8" strokeWidth="2" /><path d="M13 1V7.500H6.500Z" fill="#a8a8a8" /></Svg>
        <Sep className="ml-2 h-[26px]" />
        <Svg w={9} h={5} className="ml-[9px]"><path d="M0 0H9L4.500 5Z" fill="#555" /></Svg>
      </div>
      <div className="flex w-[164px] bg-[#efefef]">
        <Svg w={16} h={16} className="mt-1 ml-1"><rect width="16" height="16" fill="#3f6db5" /><path d="M3 2H7Q13 3 13 8Q13 13 7 14H3L8 10L3 5Z" fill="#fff" /><path d="M6 5Q10 6 9 11" stroke="#3f6db5" /></Svg>
        <span className="mt-[5px] ml-1 leading-[22px] tracking-[0.15px] whitespace-nowrap">Docer-在线模板</span>
        <Close className="mt-[9px] mr-[7px] ml-auto" />
      </div>
      <div className="flex w-[200px] border-b-2 border-[#85b96b] bg-[#e2eed9]">
        <Svg w={15} h={16} className="mt-1 ml-[5px]"><path d="M4.500 2V.5H11.500L14.500 3V14.500H4.500V12" stroke="#777" fill="#fff" /><path d="M10 5.500H13M10 8H13M10 10.500H13" stroke="#999" /><rect y="2" width="9" height="10" fill="#3d8c35" /><rect x="1" y="3" width="7" height="8" fill="#fff" /><path d="M2 4.500L7 10M7 4.500L2 10" stroke="#3d8c35" strokeWidth="1.500" /></Svg>
        <span className="mt-[5px] ml-1 leading-[22px]">1.xlsx</span>
        <Close className="mt-[9px] mr-[7px] ml-auto" />
      </div>
      <div className="flex items-center"><Svg w={12} h={12} className="ml-[7px]"><path d="M6 0V12M0 6H12" stroke="#777" strokeWidth="2" /></Svg></div>
      <div className="mr-[6px] ml-auto flex items-center">
        <Svg w={10} h={10}><path d="M0 0H5Q10 1 9.500 5Q9.500 9 5 10H0Z" fill="#73788a" /><path d="M2 4L4 8L5 2M5 8L8 4" stroke="#fff" /></Svg>
        <Svg w={10} h={10} className="ml-[14px]"><rect width="10" height="10" rx="1" fill="#73788a" /><path d="M5 2V5.500H8" stroke="#fff" /></Svg>
        <Svg w={13} h={10} className="ml-3"><path d="M0 0H8V5H5V8H0Z" fill="#777" /><path d="M5 5H13L9 10Z" fill="#777" stroke="#fbfbfb" strokeWidth=".7" /></Svg>
      </div>
    </div>
  );
}

function FormulaBar() {
  return (
    <div className="flex h-[26px] bg-[#e3e3e6] pt-[2px] pb-[2px]">
      <div className="flex w-[125px] items-center border border-l-0 border-[#cfcfd2] bg-white">
        <span className="ml-[36px] w-[90px] font-['Liberation_Serif',serif] text-[17.3px] leading-5 text-[#444]">AV41</span>
        <Caret className="mr-[3px]" />
      </div>
      <Svg w={15} h={15} className="mt-[3px] ml-[39px]"><circle cx="6.500" cy="6.500" r="5.500" stroke="#777" strokeWidth="1.300" /><path d="M10.500 10.500L14 14" stroke="#777" strokeWidth="2" /><path d="M5 9.500L6 3.500H8Q9 5 7.500 6.300H5.500L8 9.500" stroke="#777" strokeWidth=".9" /></Svg>
      <span className="ml-[11px] w-[33px] font-['DejaVu_Serif',serif] text-[14px] leading-[21px] text-[#555] italic">fx</span>
      <div className="mr-[7px] flex-1 border border-r-0 border-[#cfcfd2] bg-[#fafafa]" />
    </div>
  );
}

/* ---------- Sheet ---------- */

const colNames = Array.from({ length: 48 }, (_, i) => (i < 26 ? String.fromCharCode(65 + i) : "A" + String.fromCharCode(39 + i)));
const rowNums = Array.from({ length: 22 }, (_, i) => 21 + i);
const col = (name) => colNames.indexOf(name) + 1;
const row = (n) => n - 20;
const area = (c, r, w = 1, h = 1) => ({ gridColumn: `${col(c)} / span ${w}`, gridRow: `${row(r)} / span ${h}` });

const matrices = [
  { at: ["C", 25], w: 6, rows: ["110110", "111111", "011011", "110100", "111010", "011001"], frames: [["C", 25, 6, 6], ["C", 25, 1, 6], ["C", 25, 6, 1]] },
  { at: ["L", 25], w: 5, rows: ["11111", "11011", "10100", "11010", "11001"], frames: [["L", 25, 5, 5]] },
  { at: ["T", 25], w: 1, rows: ["1", "0", "1", "1", "0"], frames: [["T", 25, 1, 5]] },
  { at: ["V", 25], w: 1, rows: ["1"], frames: [["V", 25, 1, 1]] },
  { at: ["X", 25], w: 5, rows: ["10110"], frames: [["X", 25, 5, 1]] },
  { at: ["AG", 25], w: 5, rows: ["11111", "11011", "10110", "11110", "11001"], frames: [["AG", 25, 5, 5]] },
];

const fills = [["W", 31, 1, 1], ["Y", 31, 2, 1], ["W", 33, 1, 2], ["Y", 33, 2, 2]];

const labels = [
  ...["ξ 1", "ξ 2", "ξ 3", "L1", "L2", "L3"].map((t, i) => [colNames[2 + i], 24, t]),
  ...["ξ 1", "ξ 2", "ξ 3", "L1", "L2", "L3"].map((t, i) => ["B", 25 + i, t]),
  ...["ξ 2", "ξ 3", "L1", "L2", "L3"].flatMap((t, i) => [
    [colNames[11 + i], 24, t],
    ["K", 25 + i, t],
    ["S", 25 + i, t],
    [colNames[23 + i], 24, t],
    [colNames[32 + i], 24, t],
    ["AF", 25 + i, t],
  ]),
  ["V", 24, "ξ 1"],
];

function Frame({ a }) {
  return <div style={area(...a)} className="z-10 -mt-[2px] -mr-px -mb-px -ml-[2px] border-3 border-[#161616]" />;
}

function Sheet() {
  return (
    <div className="flex h-[837px] bg-[#fafafa] font-['Liberation_Serif','Noto_Sans_CJK_SC',serif] text-[16px] text-[#666]">
      <div className="w-[38px] shrink-0 overflow-hidden bg-[#f0f0f0]">
        <div className="flex h-[21px] items-end justify-end border-r border-b border-[#c3c3c3] pr-[4px] pb-1">
          <Svg w={11} h={11}><path d="M11 0V11H0Z" fill="#b5b5b5" /></Svg>
        </div>
        {rowNums.map((n) => (
          <div key={n} className={`flex h-[38px] items-center justify-center border-b border-b-[#d0d0d0] pt-[2px] pl-px tracking-[0.5px] ${n === 41 ? "border-r-2 border-r-[#5aa532] bg-[#d6e6ce] text-[#4f9b27]" : "border-r border-r-[#c3c3c3]"}`}>{n}</div>
        ))}
      </div>
      <div className="min-w-0 flex-1 overflow-hidden">
        <div className="grid h-[21px] grid-cols-[repeat(48,38px)] grid-rows-[21px] bg-[#f0f0f0] leading-none">
          {colNames.map((n) => (
            <div key={n} className={`flex items-center justify-center border-r border-r-[#c3c3c3] pt-[2px] pl-px ${n === "AV" ? "border-b-2 border-b-[#5aa532] bg-[#d6e6ce] text-[#4f9b27]" : "border-b border-b-[#c3c3c3]"}`}>
              <span className="inline-block scale-x-[.78] tracking-[0.5px]">{n}</span>
            </div>
          ))}
        </div>
        <div className="grid auto-rows-[38px] grid-cols-[repeat(48,38px)]">
          {rowNums.map((r) => colNames.map((c) => <div key={c + r} style={area(c, r)} className="border-r border-b border-[#c3c3c3]" />))}
          {fills.map((a, i) => <div key={i} style={area(...a)} className="-mt-px -ml-px bg-[#00b050]" />)}
          {matrices.map((m) => (
            <React.Fragment key={m.at[0]}>
              <div style={area(m.at[0], m.at[1], m.w, m.rows.length)}>
                {m.rows.map((bits, i) => (
                  <div key={i} className="flex">
                    {bits.split("").map((b, j) => (
                      <div key={j} className={`h-[38px] w-[38px] border-r border-b border-[#555] ${b === "1" ? "bg-[#00b050]" : "bg-[#fafafa]"}`} />
                    ))}
                  </div>
                ))}
              </div>
              {m.frames.map((a, i) => <Frame key={i} a={a} />)}
            </React.Fragment>
          ))}
          <Frame a={["W", 31, 5, 5]} />
          {labels.map(([c, r, t]) => (
            <div key={c + r} style={area(c, r)} className={`flex items-center pt-px tracking-[0.3px] whitespace-pre ${t[0] === "L" ? "pl-[2px]" : "pl-[6px]"}`}>
              {t[0] === "L" ? (
                <span className="inline-block origin-left scale-x-90">{t}</span>
              ) : (
                <span className="[word-spacing:1.5px]"><i className="text-[17px]">ξ</i>{t.slice(1)}</span>
              )}
            </div>
          ))}
          <div style={area("E", 23, 2)} className="mr-px mb-px flex items-center bg-[#fafafa] pt-[7px] pl-px font-['Liberation_Mono',monospace] text-[15px] leading-none">lamda_</div>
          <div style={area("AI", 23, 2)} className="mr-px mb-px flex items-center bg-[#fafafa] pt-[7px] pl-px font-['Liberation_Mono',monospace] text-[15px] leading-none">lamda'</div>
          <div style={area("Q", 27)} className="flex items-center justify-center pt-px pr-1 font-['Liberation_Sans'] text-[28px] leading-none font-bold text-[#555]">−</div>
          <div style={area("AD", 27)} className="flex items-center justify-center pt-px pr-1 font-['Liberation_Sans'] text-[32px] leading-none font-bold text-[#555]">=</div>
          <div style={area("AV", 41)} className="z-10 -mt-[2px] -mr-px -mb-px -ml-[2px] border-3 border-[#5aa532]" />
        </div>
      </div>
      <div className="flex w-[19px] shrink-0 flex-col items-center bg-[#c4c4c7]">
        <span className="mt-[7px] h-[2px] w-[13px] bg-[#999]" />
        <Svg w={9} h={5} className="mt-[13px]"><path d="M0 5H9L4.500 0Z" fill="#555" /></Svg>
        <div className="mt-[385px] flex h-[393px] w-[13px] flex-col items-center justify-center gap-[3px] bg-[#f4f4f4]">
          <span className="h-px w-[7px] bg-[#888]" /><span className="h-px w-[7px] bg-[#888]" /><span className="h-px w-[7px] bg-[#888]" />
        </div>
        <Svg w={9} h={5} className="mt-5"><path d="M0 0H9L4.500 5Z" fill="#555" /></Svg>
      </div>
    </div>
  );
}

function SheetTabs() {
  return (
    <div className="flex h-[26px] items-center bg-[#c4c4c6]">
      <div className="flex w-[74px] items-center">
        <Svg w={8} h={10} className="ml-[9px]"><path d="M.5 0V10" stroke="#999" /><path d="M7 0V10L2 5Z" fill="#999" /></Svg>
        <Svg w={5} h={10} className="ml-[9px]"><path d="M5 0V10L0 5Z" fill="#999" /></Svg>
        <Svg w={5} h={10} className="ml-2"><path d="M0 0V10L5 5Z" fill="#999" /></Svg>
        <Svg w={8} h={10} className="ml-[13px]"><path d="M6.500 0V10" stroke="#999" /><path d="M0 0V10L5 5Z" fill="#999" /></Svg>
      </div>
      <div className="flex h-full w-[78px] items-center justify-center bg-white pt-[2px] pl-[3px] text-[14.8px] font-medium text-[#4f9b27]">Sheet1</div>
      <Svg w={12} h={12} className="ml-[9px]"><path d="M6 0V12M0 6H12" stroke="#555" strokeWidth="1.800" /></Svg>
      <div className="mr-[26px] ml-auto flex items-center">
        <span className="h-[13px] w-px bg-[#888]" />
        <Svg w={5} h={9} className="ml-[13px]"><path d="M5 0V9L0 4.500Z" fill="#555" /></Svg>
        <div className="ml-[11px] flex h-[13px] w-[679px] items-center justify-center gap-[3px] bg-[#f4f4f4]">
          <span className="h-[7px] w-px bg-[#888]" /><span className="h-[7px] w-px bg-[#888]" /><span className="h-[7px] w-px bg-[#888]" />
        </div>
        <Svg w={5} h={9} className="ml-[15px]"><path d="M0 0V9L5 4.500Z" fill="#555" /></Svg>
        <span className="ml-[14px] h-[13px] w-px bg-[#888]" />
      </div>
    </div>
  );
}

function StatusBar() {
  return (
    <div className="flex h-7 items-center justify-end bg-[#dddddf] text-[14.67px] text-[#3c3c3c]">
      <span className="h-3 w-px bg-[#999]" />
      <span className="ml-1 size-[7px] border border-[#43992c] bg-[#55b93a]" />
      <span className="ml-[4px] w-[60px] whitespace-nowrap">实时备份</span>
      <div className="ml-[4px] flex h-[22px] w-[37px] items-center justify-center bg-[#c5e1b8]">
        <Svg w={15} h={14}><rect width="15" height="14" rx="1" fill="#606060" /><path d="M3.500 0V14M11.500 0V14M0 3.500H15M0 7.500H15M0 11.500H15" stroke="#dcebd5" /></Svg>
      </div>
      <Svg w={15} h={14} className="ml-[11px]"><path d="M0 0H15V12L12 14H0Z" fill="#606060" /><path d="M4.500 0V9M8.500 0V9M0 4.500H10M0 9.500H10M0 12.500H8M11.500 1V14" stroke="#ddd" /></Svg>
      <Svg w={15} h={14} className="ml-[22px]"><rect width="15" height="14" rx="1" fill="#606060" /><path d="M0 9H14M9 2V12" stroke="#ddd" strokeWidth="1.500" /></Svg>
      <Caret className="ml-[5px]" />
      <Svg w={15} h={14} className="ml-[16px]"><rect width="15" height="14" rx="1" fill="#606060" /><circle cx="7.500" cy="5.500" r="3" fill="#ddd" /><path d="M6 8H9V12H6Z" fill="#ddd" /></Svg>
      <Caret className="ml-[5px]" />
      <span className="ml-[14px] w-[42px] text-[14.3px] whitespace-nowrap [word-spacing:-1px]">115 %</span>
      <span className="ml-[5px] h-[2px] w-[10px] bg-[#555]" />
      <div className="ml-2 flex items-center">
        <span className="h-[2px] w-[63px] bg-[#5aa532]" />
        <span className="size-[13px] rounded-full border border-[#888] bg-[#f2f2f2]" />
        <span className="h-[2px] w-[58px] bg-[#888a90]" />
      </div>
      <Svg w={10} h={10} className="mr-[6px] ml-[6px]"><path d="M5 0V10M0 5H10" stroke="#555" strokeWidth="1.800" /></Svg>
    </div>
  );
}

export default function App() {
  return (
    <div className={`flex h-[1080px] w-[1920px] flex-col overflow-hidden bg-[#fbfbfb] ${UI}`}>
      <TitleBar />
      <div className="flex min-h-0 flex-1">
        <Launcher />
        <main className="flex min-w-0 flex-1 flex-col">
          <MenuRow />
          <Ribbon />
          <DocRow />
          <FormulaBar />
          <div className="flex">
            <div className="min-w-0 flex-1">
              <Sheet />
              <SheetTabs />
            </div>
            <div className="w-[7px] shrink-0 bg-[#dddde0] pt-[392px]">
              <div className="flex h-[101px] items-center justify-center bg-[#5aa532]"><Svg w={3} h={5}><path d="M3 0V5L0 2.500Z" fill="#fff" /></Svg></div>
            </div>
          </div>
          <StatusBar />
        </main>
      </div>
    </div>
  );
}
